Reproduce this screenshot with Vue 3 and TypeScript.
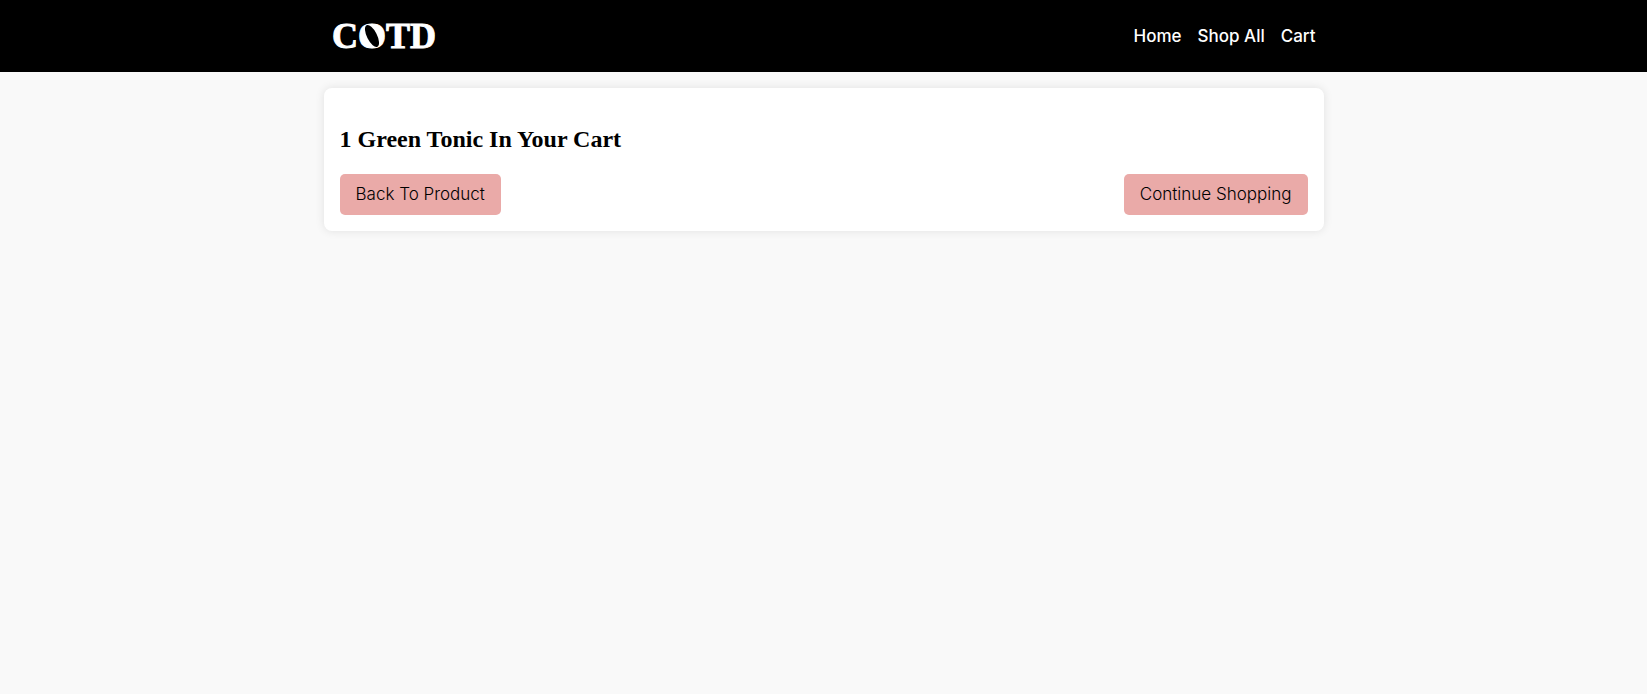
<script setup lang="ts">
interface NavLink {
  label: string
  href: string
}

const navLinks: NavLink[] = [
  { label: 'Home', href: '#home' },
  { label: 'Shop All', href: '#shop' },
  { label: 'Cart', href: '#cart' },
]

const quantity = 1
const productTitle = 'Green Tonic'
</script>

<template>
  <div class="page">
    <header class="site-header">
      <div class="header-inner">
        <a class="logo" href="#home" aria-label="COTD">
          <svg width="108" height="42" viewBox="0 0 108 42" aria-hidden="true">
            <text class="wordmark" x="0" y="33">COTD</text>
            <!-- leaf set into the round letter -->
            <ellipse class="fill" cx="40" cy="21" rx="9" ry="11" />
            <ellipse class="cut" cx="40" cy="21" rx="5" ry="12" transform="rotate(-27 40 21)" />
          </svg>
        </a>
        <nav class="nav" aria-label="Main">
          <a v-for="link in navLinks" :key="link.label" :href="link.href">{{ link.label }}</a>
        </nav>
      </div>
    </header>
    <main class="cart-card">
      <h2>{{ quantity }} {{ productTitle }} In Your Cart</h2>
      <div class="actions">
        <button type="button">Back To Product</button>
        <button type="button">Continue Shopping</button>
      </div>
    </main>
  </div>
</template>

<style>
body {
  margin: 0;
  background: #f9f9f9;
}
</style>

<style scoped>
.page {
  min-height: 100vh;
  font-family: Inter, "Liberation Sans", sans-serif;
  font-size: 17px;
  color: #000;
}

.site-header {
  background: #000;
}

.header-inner {
  display: flex;
  align-items: center;
  justify-content: space-between;
  box-sizing: border-box;
  max-width: 1000px;
  min-height: 72px;
  margin: 0 auto;
  padding: 0 8px;
}

.logo,
.logo svg {
  display: block;
}

.wordmark {
  font-family: "Liberation Serif", serif;
  font-size: 36px;
  font-weight: 700;
  fill: #fff;
  stroke: #fff;
  stroke-width: 1px;
}

.fill {
  fill: #fff;
}

.cut {
  fill: #000;
}

.nav {
  display: flex;
  gap: 16px;
}

.nav a {
  color: #fff;
  font-weight: 500;
  line-height: 24px;
  text-decoration: none;
}

.cart-card {
  box-sizing: border-box;
  max-width: 1000px;
  margin: 16px auto 0;
  padding: 16px;
  border-radius: 8px;
  background: #fff;
  box-shadow: 0 0 10px rgba(0, 0, 0, 0.1);
}

h2 {
  margin: 20px 0;
  font-family: "Liberation Serif", serif;
  font-size: 24px;
  font-weight: 700;
  line-height: 30px;
}

.actions {
  display: flex;
  flex-wrap: wrap;
  justify-content: space-between;
  gap: 16px;
}

button {
  padding: 8px 16px;
  border: 0;
  border-radius: 5px;
  background: #eaaaa8;
  color: #000;
  font-family: inherit;
  font-size: 17px;
  font-weight: 300;
  line-height: 25px;
  cursor: pointer;
}
</style>
